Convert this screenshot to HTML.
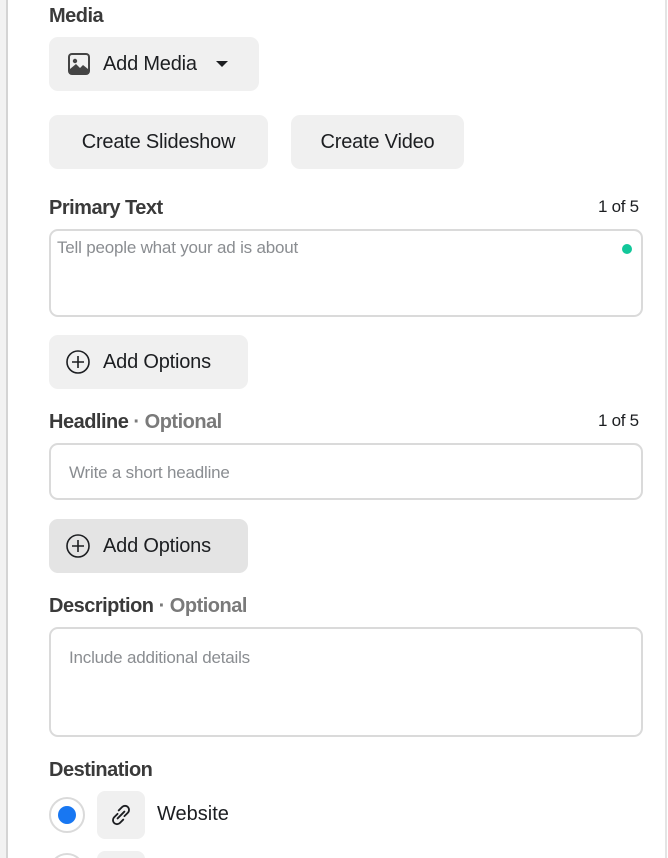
<!DOCTYPE html>
<html style="overflow:hidden;width:668px;height:858px"><head><meta charset="utf-8"><style>
*{box-sizing:border-box;margin:0;padding:0}
body{width:668px;height:858px;overflow:hidden;background:#fff;font-family:"Liberation Sans",sans-serif;color:#1c1e21;position:relative}
.a{position:absolute}
.lbl{font-weight:bold;font-size:20px;color:#3a3a3a;letter-spacing:-0.5px}
.opt{color:#7a7a7a}
.btn{background:#f0f0f0;border-radius:9px;font-size:20px;color:#1c1e21;display:flex;align-items:center;justify-content:center;letter-spacing:-0.2px}
.inp{border:2px solid #dadada;border-radius:9px;background:#fff;font-size:17px;color:#8a8d91;letter-spacing:-0.2px}
.cnt{font-size:17px;color:#1c1e21;letter-spacing:-0.3px}
</style></head><body>
<div class="a" style="left:0;top:0;width:6px;height:858px;background:#f2f2f2"></div>
<div class="a" style="left:6px;top:0;width:2px;height:858px;background:#d4d4d4"></div>
<div class="a" style="left:665px;top:0;width:2px;height:858px;background:#e4e4e4"></div>

<div class="a lbl" style="left:49px;top:5px">Media</div>
<div class="a btn" style="left:49px;top:37px;width:210px;height:54px;justify-content:flex-start;padding-left:18px">
<svg width="24" height="24" viewBox="0 0 24 24"><rect x="1" y="1" width="22" height="22" rx="4" fill="#444"/><rect x="3" y="3" width="18" height="18" rx="2" fill="#f0f0f0"/><circle cx="8" cy="9" r="2.2" fill="#444"/><path d="M3 21 L3 17 L9 12 L13 16 L16 13 L21 17 L21 21Z" fill="#444"/></svg>
<span style="margin-left:12px">Add Media</span>
<svg style="margin-left:18px" width="14" height="10" viewBox="0 0 14 10"><path d="M1 2 L13 2 L7 8Z" fill="#1c1e21"/></svg>
</div>
<div class="a btn" style="left:49px;top:115px;width:219px;height:54px">Create Slideshow</div>
<div class="a btn" style="left:291px;top:115px;width:173px;height:54px">Create Video</div>

<div class="a lbl" style="left:49px;top:197px">Primary Text</div>
<div class="a cnt" style="left:598px;top:197px">1 of 5</div>
<div class="a inp" style="left:49px;top:229px;width:594px;height:88px;padding:7px 6px">Tell people what your ad is about</div>
<div class="a" style="left:622px;top:244px;width:10px;height:10px;border-radius:50%;background:#12c79a"></div>

<div class="a btn" style="left:49px;top:335px;width:199px;height:54px;justify-content:flex-start;padding-left:16px">
<svg width="26" height="26" viewBox="0 0 26 26"><circle cx="13" cy="13" r="11" fill="none" stroke="#1c1e21" stroke-width="1.6"/><path d="M13 7V19M7 13H19" stroke="#1c1e21" stroke-width="1.6"/></svg>
<span style="margin-left:12px">Add Options</span></div>

<div class="a lbl" style="left:49px;top:411px">Headline <span class="opt">· Optional</span></div>
<div class="a cnt" style="left:598px;top:411px">1 of 5</div>
<div class="a inp" style="left:49px;top:443px;width:594px;height:57px;padding:18px 18px">Write a short headline</div>

<div class="a btn" style="left:49px;top:519px;width:199px;height:54px;background:#e4e4e4;justify-content:flex-start;padding-left:16px">
<svg width="26" height="26" viewBox="0 0 26 26"><circle cx="13" cy="13" r="11" fill="none" stroke="#1c1e21" stroke-width="1.6"/><path d="M13 7V19M7 13H19" stroke="#1c1e21" stroke-width="1.6"/></svg>
<span style="margin-left:12px">Add Options</span></div>

<div class="a lbl" style="left:49px;top:595px">Description <span class="opt">· Optional</span></div>
<div class="a inp" style="left:49px;top:627px;width:594px;height:110px;padding:19px 18px">Include additional details</div>

<div class="a lbl" style="left:49px;top:759px">Destination</div>
<div class="a" style="left:49px;top:797px;width:36px;height:36px;border-radius:50%;border:2px solid #dadada;background:#fff"></div>
<div class="a" style="left:58px;top:806px;width:18px;height:18px;border-radius:50%;background:#1877f2"></div>
<div class="a" style="left:97px;top:791px;width:48px;height:48px;border-radius:8px;background:#f0f0f0"></div>
<svg class="a" style="left:105px;top:799px" width="32" height="32" viewBox="0 0 28 28" fill="none" stroke="#1c1e21" stroke-width="1.6" stroke-linecap="round"><path d="M12 10 L15 7 a3.5 3.5 0 0 1 5 5 L17 15"/><path d="M16 18 L13 21 a3.5 3.5 0 0 1 -5 -5 L11 13"/><path d="M11 17 L17 11"/></svg>
<div class="a" style="left:157px;top:803px;font-size:20px">Website</div>
<div class="a" style="left:49px;top:853px;width:36px;height:36px;border-radius:50%;border:2px solid #dadada"></div>
<div class="a" style="left:97px;top:851px;width:48px;height:48px;border-radius:8px;background:#f0f0f0"></div>
</body></html>
